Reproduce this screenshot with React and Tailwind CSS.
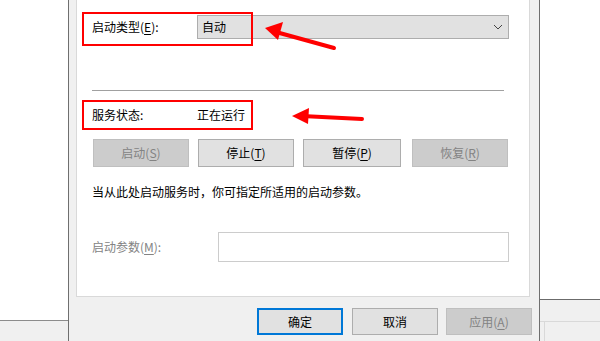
import React from "react";

const F = { fontFamily: '"Noto Sans CJK SC", "Noto Sans", sans-serif' };

function U({ children }) {
  return <span className="underline underline-offset-2">{children}</span>;
}

function Btn({ children, w, disabled, className = "" }) {
  return (
    <div
      className={
        "h-[28px] flex items-center justify-center text-[12px] border " +
        (disabled
          ? "bg-[#cccccc] border-[#bfbfbf] text-[#838383] "
          : "bg-[#e1e1e1] border-[#adadad] text-black ") +
        className
      }
      style={{ width: w }}
    >
      {children}
    </div>
  );
}

export default function App() {
  return (
    <div
      className="w-[600px] h-[341px] relative overflow-hidden flex bg-white text-[12px] leading-[16px] text-black"
      style={F}
    >
      {/* left background window */}
      <div className="w-[68px] h-full flex flex-col">
        <div className="h-[320px] bg-white" />
        <div className="h-px bg-[#8c8c8c]" />
        <div className="flex-1 bg-[#f0f0f0]" />
      </div>

      {/* dialog */}
      <div className="w-[472px] h-full bg-[#f0f0f0] border-l border-r border-[#6f6f6f] flex flex-col">
        <div className="ml-[7px] w-[454px] h-[297px] bg-white border border-t-0 border-[#d9d9d9] pl-[15px] pt-[15px]">
          {/* startup type */}
          <div className="flex items-center h-[24px]">
            <div className="w-[105px]">
              启动类型(<U>E</U>):
            </div>
            <div className="w-[312px] h-[24px] bg-[#e1e1e1] border border-[#adadad] flex items-center justify-between pl-[4px] pr-[5px]">
              <span>自动</span>
              <svg width="10" height="6" viewBox="0 0 10 6">
                <path d="M1 1 L5 5 L9 1" fill="none" stroke="#444" strokeWidth="1" />
              </svg>
            </div>
          </div>

          <div className="mt-[51px] h-px w-[412px] bg-[#a0a0a0]" />

          {/* status */}
          <div className="mt-[16px] flex items-center h-[16px]">
            <div className="w-[105px]">服务状态:</div>
            <div>正在运行</div>
          </div>

          {/* buttons */}
          <div className="mt-[16px] ml-px flex">
            <Btn w={96} disabled>
              启动(<U>S</U>)
            </Btn>
            <Btn w={96} className="ml-[9px]">
              停止(<U>T</U>)
            </Btn>
            <Btn w={98} className="ml-[9px]">
              暂停(<U>P</U>)
            </Btn>
            <Btn w={96} disabled className="ml-[11px]">
              恢复(<U>R</U>)
            </Btn>
          </div>

          <div className="mt-[17px] h-[16px]">当从此处启动服务时，你可指定所适用的启动参数。</div>

          {/* params */}
          <div className="mt-[32px] flex items-center">
            <div className="w-[126px] text-[#838383]">
              启动参数(<U>M</U>):
            </div>
            <div className="w-[291px] h-[30px] bg-white border border-[#cccccc]" />
          </div>
        </div>

        {/* bottom buttons */}
        <div className="mt-[11px] flex justify-end pr-[7px]">
          <div className="w-[86px] h-[27px] flex items-center justify-center border-2 border-[#0078d7] bg-[#e1e1e1]">
            确定
          </div>
          <div className="ml-[9px] w-[86px] h-[27px] flex items-center justify-center border border-[#adadad] bg-[#e1e1e1]">
            取消
          </div>
          <div className="ml-[8px] w-[86px] h-[27px] flex items-center justify-center border border-[#bfbfbf] bg-[#cccccc] text-[#838383]">
            应用(<U>A</U>)
          </div>
        </div>
      </div>

      {/* right background window */}
      <div className="flex-1 h-full flex flex-col">
        <div className="h-[299px] bg-white" />
        <div className="h-px bg-[#6b6b6b]" />
        <div className="h-[21px] bg-[#f0f0f0]" />
        <div className="h-px bg-[#d9d9d9]" />
        <div className="flex-1 bg-[#f0f0f0] pl-[4px]">
          <div className="h-full w-px bg-[#d9d9d9]" />
        </div>
      </div>

      {/* annotations */}
      <div className="absolute left-[82px] top-[12px] w-[171px] h-[34px] border-2 border-[#ff0000]" />
      <div className="absolute left-[82px] top-[100px] w-[171px] h-[30px] border-2 border-[#ff0000]" />
      <svg className="absolute left-0 top-0" width="600" height="341" viewBox="0 0 600 341">
        <line x1="334" y1="48" x2="276" y2="32" stroke="#ff0000" strokeWidth="4" strokeLinecap="round" />
        <polygon points="265,28 283,22 278,40" fill="#ff0000" />
        <line x1="362" y1="119" x2="302" y2="116" stroke="#ff0000" strokeWidth="4" strokeLinecap="round" />
        <polygon points="292,116 309,108 308,124" fill="#ff0000" />
      </svg>
    </div>
  );
}
